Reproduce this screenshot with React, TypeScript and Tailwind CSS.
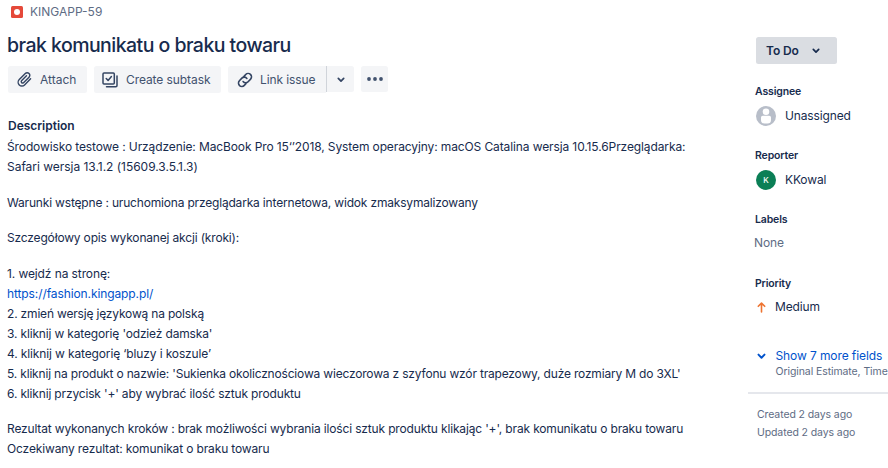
import type { ReactNode } from "react";

function Chevron({ className }: { className: string }) {
  return (
    <svg viewBox="0 0 8 6" className={className} fill="none" stroke="currentColor" strokeWidth="1.7" strokeLinecap="round" strokeLinejoin="round">
      <path d="M1.3 1.3 4 4.1l2.7-2.8" />
    </svg>
  );
}

function Line({ children, className = "" }: { children: ReactNode; className?: string }) {
  return <div className={`h-5 whitespace-nowrap ${className}`}>{children}</div>;
}

function Header() {
  return (
    <div className="flex h-6 items-center pl-[11px] text-[12px] text-[#5e6c84]">
      <span className="flex size-3 items-center justify-center rounded-[1.5px] bg-[#e5493a]">
        <span className="size-[5.5px] rounded-full bg-white" />
      </span>
      <span className="ml-[7px]">KINGAPP-59</span>
    </div>
  );
}

function Toolbar() {
  return (
    <div className="mt-[9px] flex h-[27px] pl-2 text-[12px] text-[#42526e]">
      <button className="flex w-[79px] items-center rounded-[2.5px] bg-[#f4f5f7] pl-2">
        <svg viewBox="0 0 24 24" className="size-[17px]" fill="none" stroke="#344563" strokeWidth="2" strokeLinecap="round" strokeLinejoin="round">
          <path d="m20.600 11-8.500 8.600a5.300 5.300 0 0 1-7.500-7.500l8.500-8.600a3.700 3.700 0 0 1 5.300 5.300l-7.800 7.800a2 2 0 0 1-2.800-2.800l7-7.100" />
        </svg>
        <span className="ml-[7px]">Attach</span>
      </button>
      <button className="ml-[7px] flex w-[127px] items-center rounded-[2.5px] bg-[#f4f5f7] pl-2">
        <svg viewBox="0 0 16 16" className="size-4" fill="none" stroke="#344563" strokeWidth="1.5" strokeLinecap="round" strokeLinejoin="round">
          <rect x="1" y="1" width="11.300" height="11" rx="1" />
          <path d="m4.200 6.500 1.900 1.900L9.400 4.500M15 4v9.600a1.100 1.100 0 0 1-1.100 1.100H4.500" />
        </svg>
        <span className="ml-2 tracking-[-0.08px]">Create subtask</span>
      </button>
      <div className="ml-[7px] flex w-[126px]">
        <button className="flex w-[98px] items-center rounded-l-[2.5px] bg-[#f4f5f7] pl-[9px]">
          <svg viewBox="0 0 16 16" className="size-4" fill="none" stroke="#344563" strokeWidth="1.6" strokeLinecap="round" strokeLinejoin="round">
            <path d="M6.800 4.600 8.700 2.500a3.350 3.350 0 0 1 4.900 4.600l-2.500 2.700a3.300 3.300 0 0 1-5-.3M9.300 11.200l-2 2.200a3.350 3.350 0 0 1-4.900-4.600l2.500-2.700a3.300 3.300 0 0 1 5 .3" />
          </svg>
          <span className="ml-[7px] tracking-[-0.1px]">Link issue</span>
        </button>
        <button className="flex h-[26px] w-7 items-center justify-center rounded-r-[2.5px] border-l border-[#d0d4da] bg-[#f4f5f7] pt-px">
          <Chevron className="h-[6px] w-2 text-[#344563]" />
        </button>
      </div>
      <button className="ml-[7px] flex h-[26px] w-[27px] items-center justify-center rounded-[2.5px] bg-[#f4f5f7]">
        <svg viewBox="0 0 16 4" className="h-1 w-4" fill="#42526e">
          <circle cx="2" cy="2" r="1.900" />
          <circle cx="8" cy="2" r="1.900" />
          <circle cx="14" cy="2" r="1.900" />
        </svg>
      </button>
    </div>
  );
}

function Description() {
  return (
    <div className="mt-[23px] pl-[7px] text-[12px] leading-5 tracking-[-0.16px]">
      <h2 className="h-[21px] pl-px font-semibold tracking-[-0.02px]">Description</h2>
      <Line className="tracking-[-0.112px]">Środowisko testowe : Urządzenie: MacBook Pro 15‘’2018, System operacyjny: macOS Catalina wersja 10.15.6Przeglądarka:</Line>
      <Line className="tracking-[-0.03px]">Safari wersja 13.1.2 (15609.3.5.1.3)</Line>
      <Line className="mt-4 tracking-[-0.18px]">Warunki wstępne : uruchomiona przeglądarka internetowa, widok zmaksymalizowany</Line>
      <Line className="mt-[15px] tracking-[-0.17px]">Szczegółowy opis wykonanej akcji (kroki):</Line>
      <Line className="mt-4 tracking-[-0.1px]">1. wejdź na stronę:</Line>
      <Line className="tracking-[-0.1px] text-[#0052cc]">https://fashion.kingapp.pl/</Line>
      <Line className="tracking-[-0.18px]">2. zmień wersję językową na polską</Line>
      <Line>3. kliknij w kategorię 'odzież damska'</Line>
      <Line className="tracking-[-0.13px]">4. kliknij w kategorię ‘bluzy i koszule’</Line>
      <Line className="tracking-[-0.182px]">5. kliknij na produkt o nazwie: 'Sukienka okolicznościowa wieczorowa z szyfonu wzór trapezowy, duże rozmiary M do 3XL'</Line>
      <Line>6. kliknij przycisk '+' aby wybrać ilość sztuk produktu</Line>
      <Line className="mt-[15px] tracking-[-0.16px]">Rezultat wykonanych kroków : brak możliwości wybrania ilości sztuk produktu klikając '+', brak komunikatu o braku towaru</Line>
      <Line className="tracking-[-0.14px]">Oczekiwany rezultat: komunikat o braku towaru</Line>
    </div>
  );
}

function FieldLabel({ children }: { children: ReactNode }) {
  return <h3 className="h-4 pl-[7px] text-[10.5px] leading-4 font-semibold tracking-[-0.15px]">{children}</h3>;
}

function Sidebar() {
  return (
    <aside className="w-[140px] shrink-0 overflow-hidden pt-[37px] text-[12px] leading-4 tracking-[-0.14px] whitespace-nowrap">
      <button className="ml-2 flex h-[27px] w-[81px] items-center rounded-[2.5px] bg-[#dadde2] pl-[10px] font-semibold tracking-[-0.1px]">
        To Do
        <Chevron className="ml-[13px] h-[6px] w-2" />
      </button>
      <div className="mt-5 h-16">
        <FieldLabel>Assignee</FieldLabel>
        <div className="mt-[6px] flex items-center pl-2">
          <svg viewBox="0 0 20 20" className="size-5">
            <circle cx="10" cy="10" r="10" fill="#b8bec9" />
            <circle cx="10" cy="5.700" r="3.300" fill="#fff" />
            <path d="M5 11.500A1.700 1.700 0 0 1 6.700 9.800h6.600A1.700 1.700 0 0 1 15 11.500V14a3.500 3.500 0 0 1-3.500 3.500h-3A3.500 3.500 0 0 1 5 14Z" fill="#fff" />
          </svg>
          <span className="ml-[9px]">Unassigned</span>
        </div>
      </div>
      <div className="h-16">
        <FieldLabel>Reporter</FieldLabel>
        <div className="mt-[6px] flex items-center pl-2">
          <span className="flex size-5 items-center justify-center rounded-full bg-[#0b7f56] text-[8px] font-medium text-white">K</span>
          <span className="ml-[9px]">KKowal</span>
        </div>
      </div>
      <div className="h-16">
        <FieldLabel>Labels</FieldLabel>
        <div className="mt-[7px] pl-[6px] text-[#5e6c84]">None</div>
      </div>
      <div className="h-[72px]">
        <FieldLabel>Priority</FieldLabel>
        <div className="mt-[7px] flex items-center pl-[9px]">
          <svg viewBox="0 0 9 11" className="h-[11px] w-[9px]" fill="none" stroke="#ee7431" strokeWidth="1.6" strokeLinecap="round" strokeLinejoin="round">
            <path d="M4.500 10V1.200M1.300 4.300l3.200-3.200 3.200 3.200" />
          </svg>
          <span className="ml-[9px]">Medium</span>
        </div>
      </div>
      <div className="flex items-center pl-[9px] text-[#0052cc]">
        <Chevron className="h-[7px] w-[9px]" />
        <span className="ml-[9.5px] tracking-[-0.1px]">Show 7 more fields</span>
      </div>
      <div className="pl-[27.5px] text-[10.5px] tracking-[-0.09px] text-[#5e6c84]">Original Estimate, Time</div>
      <div className="mt-3 h-[2px] bg-[#e5e7ec]" />
      <div className="mt-3 pl-[9px] text-[10.5px] leading-[18px] tracking-[-0.1px] text-[#5e6c84]">
        <div>Created 2 days ago</div>
        <div>Updated 2 days ago</div>
      </div>
    </aside>
  );
}

export default function App() {
  return (
    <div className="flex h-[468px] w-[888px] overflow-hidden bg-white font-['Inter',sans-serif] text-[#172b4d]">
      <main className="w-[748px] shrink-0">
        <Header />
        <h1 className="mt-[9px] h-6 pl-[7px] text-[19.5px] leading-6 font-[550] tracking-[-0.54px]">brak komunikatu o braku towaru</h1>
        <Toolbar />
        <Description />
      </main>
      <Sidebar />
    </div>
  );
}
